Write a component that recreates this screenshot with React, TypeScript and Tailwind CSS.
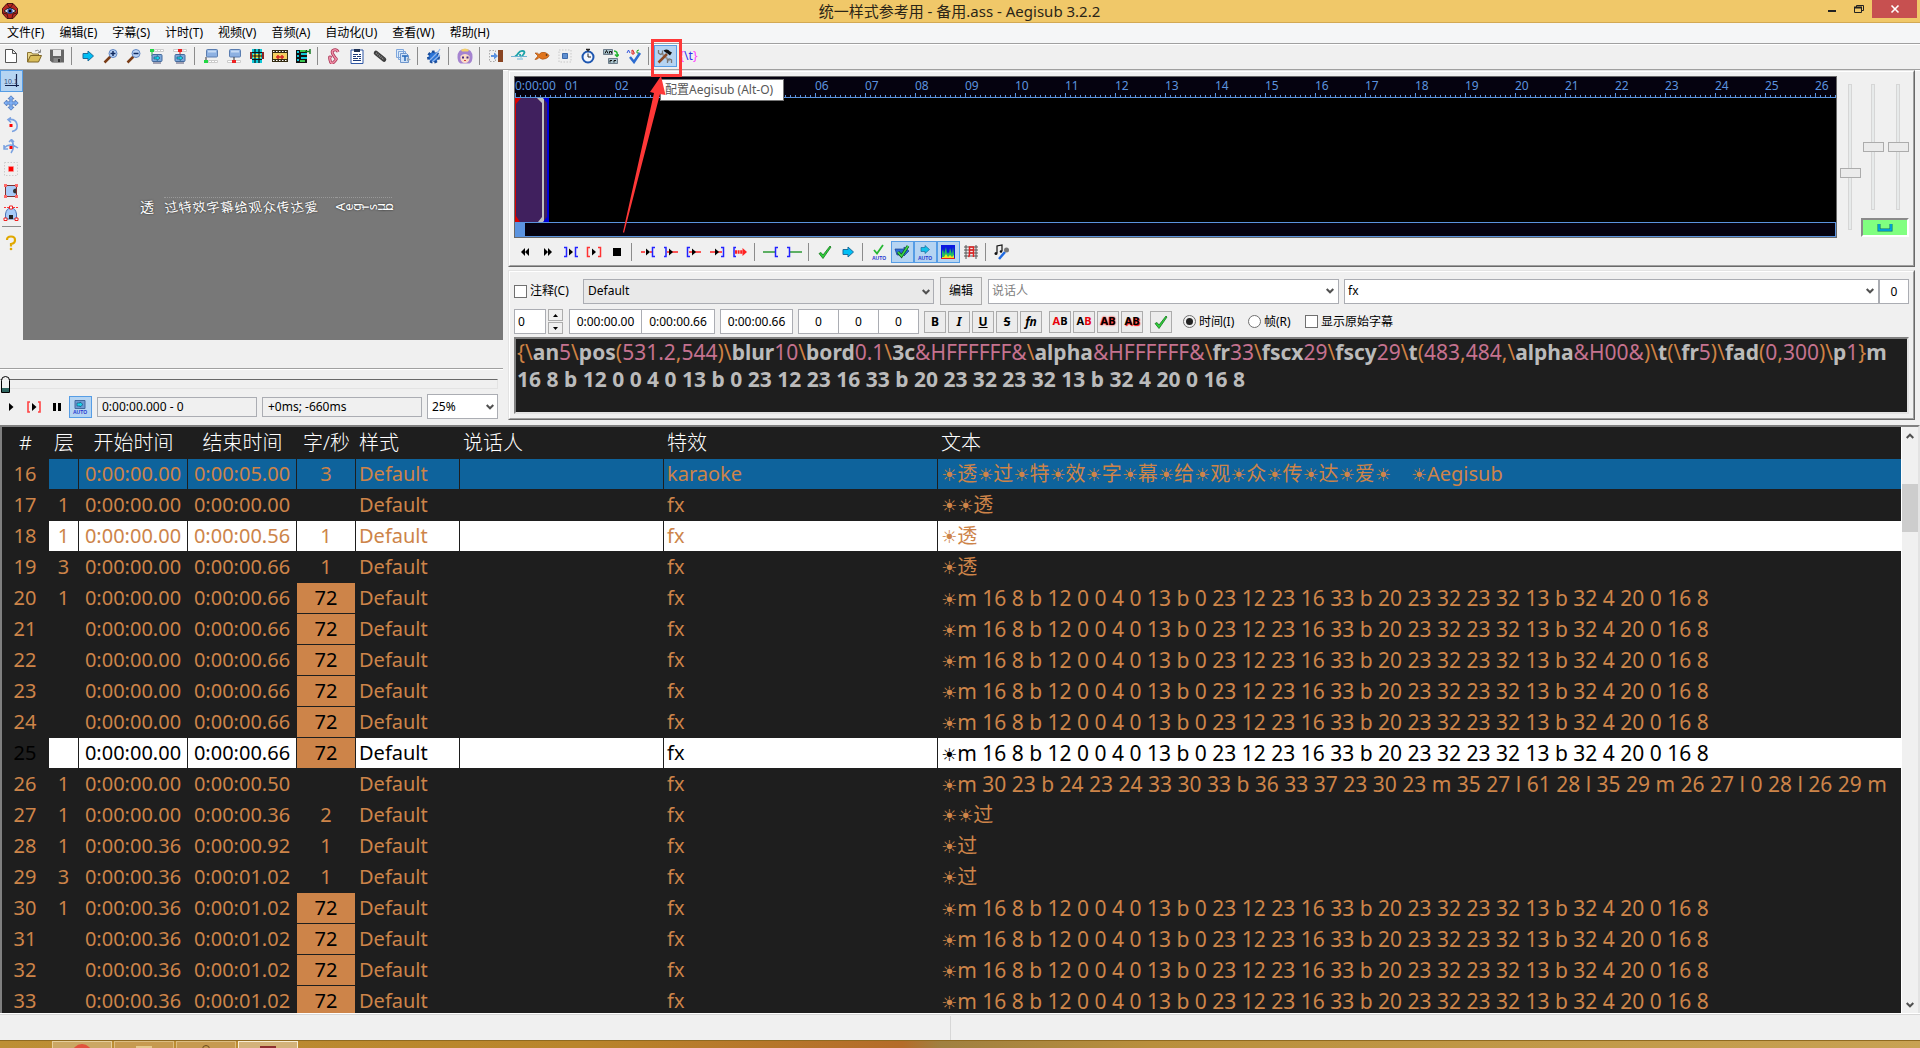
/**
 * Subtitle editor window: toolbar, video preview, audio display, line editor and grid.
 */

import type { ReactNode } from 'react'
import clsx from 'clsx'

const ICONS: Record<string, ReactNode> = {
  new: (
    <path d="M2.5 1.5h7l4 4v9h-11zM9.5 1.5v4h4" fill="#fff" stroke="#555" />
  ),
  open: (
    <>
      <path d="M1.500 14V4.500h4l1 1.500h6V8" fill="#e9d68a" stroke="#8b7433" />
      <path d="M1.500 14l3-6.500h11l-3 6.500z" fill="#d9bd5a" stroke="#7d6526" />
      <path d="M9 3q3-2 5 1M14.500 1.500V4.500H12" fill="none" stroke="#888" />
    </>
  ),
  save: (
    <>
      <path d="M1 1.500h14v13H3l-2-2z" fill="#666" />
      <path d="M4 2h8v6H4z" fill="#e8e8e8" />
      <path d="M4.500 10h7v4.500h-7z" fill="#888" />
      <path d="M9 11h2v3H9z" fill="#333" />
    </>
  ),
  jump: <path d="M3 5.500h5V3l5.500 5L8 13v-2.500H3z" fill="#00bff5" stroke="#1b6d9c" />,
  zoomIn: (
    <>
      <path d="M1.500 14.500l6-6" stroke="#7a3c16" strokeWidth="2.500" />
      <circle cx="10" cy="5.500" r="4" fill="#b9d2f5" stroke="#5f86c4" />
      <path d="M7.500 5.500h5M10 3v5" stroke="#102a60" strokeWidth="1.500" />
    </>
  ),
  zoomOut: (
    <>
      <path d="M1.500 14.500l6-6" stroke="#7a3c16" strokeWidth="2.500" />
      <circle cx="10" cy="5.500" r="4" fill="#b9d2f5" stroke="#5f86c4" />
      <path d="M7.500 5.500h5" stroke="#102a60" strokeWidth="1.500" />
    </>
  ),
  jumpStart: (
    <>
      <path d="M1 1h4v3H1z" fill="#22d844" />
      <path d="M5.500 1.500h9v2h-9zM8.500 1.500v2M11.500 1.500v2" fill="#fff" stroke="#ccc" />
      <path d="M3 4v4" stroke="#22a844" />
      <rect x="3" y="6.500" width="10" height="7" rx="1" fill="#7ea8da" stroke="#446a9c" />
      <path d="M5 9h3V7.500l3 2.500-3 2.500V11H5z" fill="#16d5ee" stroke="#174a6c" strokeWidth=".6" />
      <path d="M4 15h8" stroke="#557" />
    </>
  ),
  jumpEnd: (
    <>
      <path d="M1.500 1.500h13v2h-13zM11 1.500v2" fill="#fff" stroke="#ccc" />
      <path d="M6 1h4v3H6z" fill="#ee2222" />
      <path d="M8 4v3" stroke="#c22" />
      <rect x="3" y="6.500" width="10" height="7" rx="1" fill="#7ea8da" stroke="#446a9c" />
      <path d="M5 9h3V7.500l3 2.500-3 2.500V11H5z" fill="#16d5ee" stroke="#174a6c" strokeWidth=".6" />
      <path d="M4 15h8" stroke="#557" />
    </>
  ),
  snapStart: (
    <>
      <rect x="3.500" y="1.500" width="11" height="7.500" rx="1" fill="#8db1e2" stroke="#5a7db0" />
      <path d="M5 2.500h8v2H5z" fill="#c5daf5" />
      <path d="M3 9v3" stroke="#333" />
      <path d="M1 12h4v3H1z" fill="#22d844" />
      <path d="M5.500 12.500h9v2h-9zM8.500 12.500v2M11.500 12.500v2" fill="#fff" stroke="#ccc" />
    </>
  ),
  snapEnd: (
    <>
      <rect x="3.500" y="1.500" width="11" height="7.500" rx="1" fill="#8db1e2" stroke="#5a7db0" />
      <path d="M5 2.500h8v2H5z" fill="#c5daf5" />
      <path d="M1.500 12.500h13v2h-13z" fill="#fff" stroke="#ccc" />
      <path d="M8 9v3" stroke="#333" />
      <path d="M6 12h4v3H6z" fill="#ee2222" />
    </>
  ),
  selectVisible: (
    <>
      <path d="M1 4h14v7H1z" fill="#8d2222" />
      <path d="M3 1h10v14H3z" fill="#10c8d8" />
      <path d="M4 6h8v4H4z" fill="#e8e040" />
      <path d="M3 4.500h10M3 8h10M3 11.500h10M6 1v14M10 1v14" stroke="#111" strokeWidth="1.200" />
    </>
  ),
  snapScene: (
    <>
      <path d="M0 2h16v12H0z" fill="#332a10" />
      <path d="M1 5h14v6H1z" fill="#f5d060" />
      <path d="M1 3.500h14M1 12.500h14" stroke="#fff" strokeDasharray="1.500 1.500" />
      <path d="M4 9h8M6 7v4M10 7v4" stroke="#d42222" strokeWidth="1.500" />
    </>
  ),
  shiftFrame: (
    <>
      <path d="M1 2h11v13H1z" fill="#111" />
      <path d="M2 3h2v2H2zM2 7h2v2H2zM2 11h2v2H2zM6 5h6v2H6zM6 9h6v2H6z" fill="#10c8d8" />
      <path d="M5 2h6v2H5zM5 12h5v2H5z" fill="#38c850" />
      <path d="M15 1v5M15 3.500h-5" stroke="#167a22" strokeWidth="1.500" />
    </>
  ),
  styles: (
    <>
      <path d="M12 4q-1-3-4-2T7 6.500t3 4-2 3.500-4-2 1-2" fill="none" stroke="#a83252" strokeWidth="3" />
      <path d="M12 4q-1-3-4-2T7 6.500t3 4-2 3.500-4-2 1-2" fill="none" stroke="#f090a8" strokeWidth="1.500" />
    </>
  ),
  properties: (
    <>
      <path d="M2 2h12v13.500H2z" fill="#fff" stroke="#2f57a5" />
      <path d="M5 1h6v3H5z" fill="#1c3054" />
      <path d="M4 6.500h5M10 6.500h2M4 8.500h3M8 8.500h4M4 10.500h5M10 10.500h2M4 12.500h8" stroke="#1b3a7a" />
    </>
  ),
  attach: (
    <>
      <path d="M4 5l8 6.500" stroke="#3d3d3d" strokeWidth="4.500" strokeLinecap="round" />
      <path d="M4 5l8 6.500" stroke="#888" strokeWidth="2" strokeDasharray="1 1" />
    </>
  ),
  fonts: (
    <>
      <path d="M1.500 1.500h7v8h-7zM3.500 3.500h7v8h-7z" fill="#dcebfa" stroke="#7ea6dc" />
      <path d="M5.500 5.500h6l2 2v7h-8z" fill="#cfe2f8" stroke="#6f96cc" />
      <path d="M7 8h6M10 8v5" stroke="#2467b8" strokeWidth="1.500" />
      <path d="M12 9.500l4 2-4 2z" fill="#9ab" />
    </>
  ),
  gear: (
    <>
      <circle cx="7.500" cy="9" r="5" fill="#2368c8" stroke="#1a4d9c" strokeWidth="3" strokeDasharray="2.500 1.800" />
      <circle cx="7.500" cy="9" r="4" fill="#2b74d8" />
      <path d="M4 12l8-8 2-3M6 14l8-7" stroke="#8fb4ea" strokeWidth="1.200" fill="none" />
    </>
  ),
  girl: (
    <>
      <path d="M.500 9q0-8 7.500-8t7.500 8q0 5-3 6.500H3.500q-3-1.500-3-6.500z" fill="#a583d0" />
      <path d="M3.500 8q4.500-4 9 0v3q-1 4-4.500 4t-4.500-4z" fill="#fbdcc8" />
      <path d="M4 2q4-3 8 0l-1 1.500H5z" fill="#f2cf6a" />
      <path d="M5 9.500h2M9.500 9.500h2" stroke="#4a2a80" strokeWidth="1.800" />
      <path d="M7 12.500h2" stroke="#d04040" />
    </>
  ),
  shiftTimes: (
    <>
      <path d="M1.500 2.500h6v11h-6z" fill="none" stroke="#aaa" strokeDasharray="1.500 1.500" />
      <path d="M10 2h5v12h-5z" fill="#8a4522" />
      <path d="M3 7h3V4.500L10 8l-4 3.500V9H3z" fill="#5b92e0" />
    </>
  ),
  wave: (
    <>
      <path d="M4 8.500q2-1 3.500-3.500T12 3t0 4-3-1" fill="none" stroke="#1aa2a8" strokeWidth="1.800" />
      <path d="M0 8.500h16M6 11h6" stroke="#6fb4d4" />
    </>
  ),
  fish: (
    <>
      <path d="M1 5l3 3-3 3.500q3 0 4-2 3 3 7 1 2.500-1 3-3-1-2-4-3-4-1-6 2-1-2-4-1.500z" fill="#e0741c" stroke="#a84f10" strokeWidth=".7" />
      <circle cx="12.500" cy="7" r=".8" fill="#222" />
    </>
  ),
  resample: (
    <>
      <path d="M2 2h12v12H2z" fill="none" stroke="#c8c8c8" strokeDasharray="1.500 1.500" />
      <path d="M5.500 5.500h5v5h-5z" fill="#5f8fd0" stroke="#3d6aac" />
    </>
  ),
  clock: (
    <>
      <circle cx="8" cy="9" r="5.500" fill="#f4f8ff" stroke="#1d56b0" strokeWidth="2" />
      <path d="M6 1.500h4M8 1.500v2" stroke="#222" strokeWidth="1.500" />
      <path d="M8 5.500V9h3" stroke="#222" fill="none" />
    </>
  ),
  translate: (
    <>
      <path d="M.500 1.500h9v5h-9zM5.500 10.500h9v5h-9z" fill="#a9c3cc" stroke="#567" strokeWidth=".8" />
      <path d="M2 5.500l1.500-3 1.500 3M6.500 5.500V3.500h2v2M7 14.500v-2h2M11 14.500v-2h2" fill="none" stroke="#111" />
      <path d="M11 3q4 0 3 5M12 6.500l2 2 2-2" fill="none" stroke="#1fb52e" strokeWidth="1.500" />
    </>
  ),
  spell: (
    <>
      <path d="M1 5l1.500-3L4 5" fill="none" stroke="#3355dd" />
      <path d="M6 2v4h2q1-2-1-2 2-1-1-2" fill="none" stroke="#dd2222" />
      <path d="M13 2q-3 0-2 3h2" fill="none" stroke="#22aa22" />
      <path d="M4 9l4 5 6-9" fill="none" stroke="#2d6cd0" strokeWidth="2.500" />
    </>
  ),
  options: (
    <>
      <path d="M4.500 5l8 8" stroke="#999" strokeWidth="2" />
      <path d="M1.500 2v3l2 1.500 2-1V2.500M14.500 15v-3l-2-1-2 1v3" fill="none" stroke="#777" strokeWidth="1.300" />
      <path d="M1.500 14.500L10 6" stroke="#8b4a26" strokeWidth="2.500" />
      <path d="M6.500 2.500q4-2.500 6.500 1l2 1-2 3-2.500-2L8 4z" fill="#111" />
    </>
  ),
  cross: (
    <>
      <path d="M2 12.500h14M13.500 1v13" stroke="#10204c" strokeWidth="1.200" />
      <text x="1" y="11" fontSize="7" fill="#334a78" fontFamily="Liberation Sans, sans-serif">10.1</text>
    </>
  ),
  move: (
    <path
      d="M8 .800l3 3H9.200v3h3V5l3 3-3 3V9.200h-3v3H11l-3 3-3-3h1.800v-3h-3V11l-3-3 3-3v1.800h3v-3H5z"
      fill="#7fb0f5"
      stroke="#4a74b8"
      strokeWidth=".8"
    />
  ),
  rotZ: (
    <>
      <path d="M5 2.500q8-1 9 5t-5 7M8 .500l-3 2 3 3" fill="none" stroke="#7ba2e0" strokeWidth="1.600" />
      <path d="M6.500 7h3v3h-3z" fill="#f00" />
    </>
  ),
  rotXY: (
    <>
      <path d="M1 9q6-6 14 0M1 6v4h4M8 1q5 6 0 13M6 3l2.500-2.500L11 3" fill="none" stroke="#7ba2e0" strokeWidth="1.500" />
      <path d="M6.500 7h3v3h-3z" fill="#f00" />
    </>
  ),
  scale: (
    <>
      <path d="M1.500 1.500h13v13h-13z" fill="none" stroke="#ccc" strokeDasharray="1.500 1.500" />
      <path d="M5.500 5.500h5v5h-5z" fill="#f00" stroke="#f99" strokeWidth=".5" />
    </>
  ),
  clip: (
    <>
      <path d="M2.500 2.500h11v11h-11z" fill="#a8cbf8" stroke="#803030" />
      <path d="M1 1h3v3H1zM12 1h3v3h-3zM1 12h3v3H1zM12 12h3v3h-3z" fill="#ff6a6a" />
      <path d="M13 5.500q-3 0-3 2.500t3 2.500z" fill="#333" />
    </>
  ),
  vclip: (
    <>
      <path d="M2.500 14V9q1-6 5.500-6t5.500 6v5z" fill="#a8cbf8" stroke="#4a74b8" />
      <path d="M1 2.500h14" stroke="#f33" strokeDasharray="2 1" />
      <path d="M1 13h3v2.500H1zM12 13h3v2.500h-3zM6.500 1h3v3h-3z" fill="#fff" stroke="#e22" />
      <path d="M6 14v-4h4v4z" fill="#222" />
    </>
  ),
  help: (
    <>
      <path d="M4 5q0-3.500 4-3.500t4 3.500-4 4v2.500" fill="none" stroke="#e0a800" strokeWidth="2.200" />
      <circle cx="8" cy="14" r="1.300" fill="#e0a800" />
    </>
  ),
  play: <path d="M6 4l4.500 4L6 12z" fill="#000" />,
  playLine: (
    <>
      <path d="M4 3H2v10h2M12 3h2v10h-2" fill="none" stroke="#f44" strokeWidth="1.600" />
      <path d="M6 4l4.500 4L6 12z" fill="#000" />
    </>
  ),
  pause: <path d="M4 4h3v8H4zM9 4h3v8H9z" fill="#000" />,
  autoVideo: (
    <>
      <path d="M3 1.500h10v8H3z" fill="#6c98d2" stroke="#44699c" />
      <path d="M5 4h3V3l3 2.500L8 8V7H5z" fill="#16d5ee" stroke="#174a6c" strokeWidth=".6" />
      <text x="1" y="15" fontSize="5" fontWeight="700" fill="#2436d0" fontFamily="Liberation Sans, sans-serif">AUTO</text>
    </>
  ),
  prev: <path d="M8 4v8L4 8zM12 4v8L8 8z" fill="#000" />,
  next: <path d="M4 4v8l4-4zM8 4v8l4-4z" fill="#000" />,
  playSel: (
    <>
      <path d="M1 3.500h2.500v9H1M15 3.500h-2.500v9H15" fill="none" stroke="#22f" strokeWidth="1.500" />
      <path d="M6 4.500v7L10 8z" fill="#000" />
    </>
  ),
  playLineRed: (
    <>
      <path d="M4 3.500H1.500v9H4M12 3.500h2.500v9H12" fill="none" stroke="#f33" strokeWidth="1.500" />
      <path d="M6 4.500v7L10 8z" fill="#000" />
    </>
  ),
  stop: <path d="M4 4h8v8H4z" fill="#000" />,
  before: (
    <>
      <path d="M1 8h4M10 8h2" stroke="#f22" strokeWidth="1.500" />
      <path d="M6 4.500v7L10 8z" fill="#000" />
      <path d="M15 3.500h-2.500v9H15" fill="none" stroke="#22f" strokeWidth="1.500" />
    </>
  ),
  after: (
    <>
      <path d="M1 3.500h2v9H1" fill="none" stroke="#22f" strokeWidth="1.500" />
      <path d="M4 8h11" stroke="#f22" strokeWidth="1.500" />
      <path d="M6 4.500v7L10 8z" fill="#000" />
    </>
  ),
  begin: (
    <>
      <path d="M4 3.500H1.500v9H4" fill="none" stroke="#22f" strokeWidth="1.500" />
      <path d="M3 8h12" stroke="#f22" strokeWidth="1.500" />
      <path d="M6 4.500v7L10 8z" fill="#000" />
    </>
  ),
  finish: (
    <>
      <path d="M12 3.500h2.500v9H12" fill="none" stroke="#22f" strokeWidth="1.500" />
      <path d="M1 8h12" stroke="#f22" strokeWidth="1.500" />
      <path d="M6 4.500v7L10 8z" fill="#000" />
    </>
  ),
  toEnd: (
    <>
      <path d="M4 3.500H2v9h2" fill="none" stroke="#22f" strokeWidth="1.500" />
      <path d="M3 8h9" stroke="#f22" strokeWidth="3.500" strokeDasharray="2 .600" />
      <path d="M10.500 4v8L15 8z" fill="#f22" />
    </>
  ),
  leadIn: (
    <>
      <path d="M0 8h12" stroke="#2c9a34" strokeWidth="1.500" />
      <path d="M15 3.500h-2.500v9H15" fill="none" stroke="#22f" strokeWidth="1.500" />
    </>
  ),
  leadOut: (
    <>
      <path d="M4 8h12" stroke="#2c9a34" strokeWidth="1.500" />
      <path d="M1 3.500h2.500v9H1" fill="none" stroke="#22f" strokeWidth="1.500" />
    </>
  ),
  commit: (
    <path d="M2 9.500l2-1 2 2.500 7-9 1 1-8 11.500z" fill="#2fd03c" stroke="#15781d" strokeWidth=".8" />
  ),
  autoCommit: (
    <>
      <path d="M3 6l3 3.500L12 1" fill="none" stroke="#27b834" strokeWidth="1.800" />
      <text x="1" y="15.500" fontSize="5" fontWeight="700" fill="#2436d0" fontFamily="Liberation Sans, sans-serif">AUTO</text>
    </>
  ),
  nextCommit: (
    <>
      <path d="M1 5h9V3l5 4-5 5v-1H3z" fill="#2a6ad8" stroke="#173f8c" strokeWidth=".7" />
      <path d="M4 8l3.500 4L14 2" fill="none" stroke="#16501c" strokeWidth="3" />
      <path d="M4 8l3.500 4L14 2" fill="none" stroke="#38d848" strokeWidth="1.600" />
    </>
  ),
  autoNext: (
    <>
      <path d="M4 3.500h4v-2l4.500 4-4.500 4v-2H4z" fill="#12c0ea" stroke="#1b6d9c" strokeWidth=".7" />
      <text x="1" y="15.500" fontSize="5" fontWeight="700" fill="#2436d0" fontFamily="Liberation Sans, sans-serif">AUTO</text>
    </>
  ),
  spectrum: (
    <>
      <path d="M1 1h14v14H1z" fill="#0a18e0" />
      <path d="M2 15V8l1-3 1 5 2-7 1 7 1-2 1 2 1-6 2 6 1-7 1 8v4z" fill="#20c060" />
      <path d="M2 15v-2l2 0 2-3 2 3 2-2 2 2 2-2v4z" fill="#f5e020" />
      <path d="M1 14.500h14" stroke="#e02020" />
    </>
  ),
  medusa: (
    <>
      <path d="M1 3h14M1 6h14M1 9h14M1 12h14M3 1v14M13 1v14" stroke="#555" />
      <path d="M5.500 13q1-1 1-4V3h4v10M6.500 6h4M6.500 9h4" fill="none" stroke="#e32222" strokeWidth="1.500" />
    </>
  ),
  karaoke: (
    <>
      <path d="M3 9V2l5-1v6" fill="none" stroke="#111" strokeWidth="1.200" />
      <circle cx="2" cy="9.500" r="1.500" fill="#111" />
      <circle cx="7" cy="7.500" r="1.300" fill="#111" />
      <path d="M5 15l6-7" stroke="#1f6ae0" strokeWidth="2.500" />
      <circle cx="12.500" cy="6" r="2.500" fill="#777" />
    </>
  ),
}

type Tool = { icon: string; label: string; on?: boolean } | null

const MAIN_TOOLS: Tool[] = [
  { icon: 'new', label: '新建' },
  { icon: 'open', label: '打开' },
  { icon: 'save', label: '保存' },
  null,
  { icon: 'jump', label: '跳转' },
  { icon: 'zoomIn', label: '放大' },
  { icon: 'zoomOut', label: '缩小' },
  { icon: 'jumpStart', label: '跳到开始' },
  { icon: 'jumpEnd', label: '跳到结束' },
  null,
  { icon: 'snapStart', label: '对齐开始' },
  { icon: 'snapEnd', label: '对齐结束' },
  { icon: 'selectVisible', label: '选择可见' },
  { icon: 'snapScene', label: '对齐场景' },
  { icon: 'shiftFrame', label: '平移到帧' },
  null,
  { icon: 'styles', label: '样式管理' },
  { icon: 'properties', label: '属性' },
  { icon: 'attach', label: '附件' },
  { icon: 'fonts', label: '字体收集' },
  null,
  { icon: 'gear', label: '自动化' },
  null,
  { icon: 'girl', label: '助手' },
  null,
  { icon: 'shiftTimes', label: '平移时间' },
  { icon: 'wave', label: '样式助手' },
  { icon: 'fish', label: '翻译' },
  { icon: 'resample', label: '重设分辨率' },
  { icon: 'clock', label: '时间后续处理' },
  { icon: 'translate', label: '翻译助手' },
  { icon: 'spell', label: '拼写检查' },
  null,
  { icon: 'options', label: '配置', on: true },
]

const VIDEO_TOOLS: Tool[] = [
  { icon: 'cross', label: '标准', on: true },
  { icon: 'move', label: '拖动' },
  { icon: 'rotZ', label: '旋转 Z' },
  { icon: 'rotXY', label: '旋转 XY' },
  { icon: 'scale', label: '缩放' },
  { icon: 'clip', label: '矩形裁剪' },
  { icon: 'vclip', label: '矢量裁剪' },
]

const PLAY_TOOLS: Tool[] = [
  { icon: 'play', label: '播放' },
  { icon: 'playLine', label: '播放当前行' },
  { icon: 'pause', label: '暂停' },
  { icon: 'autoVideo', label: '自动跳转', on: true },
]

const AUDIO_TOOLS: Tool[] = [
  { icon: 'prev', label: '上一行' },
  { icon: 'next', label: '下一行' },
  { icon: 'playSel', label: '播放选区' },
  { icon: 'playLineRed', label: '播放当前行音频' },
  { icon: 'stop', label: '停止' },
  null,
  { icon: 'before', label: '播放前 500ms' },
  { icon: 'after', label: '播放后 500ms' },
  { icon: 'begin', label: '播放起始 500ms' },
  { icon: 'finish', label: '播放末尾 500ms' },
  { icon: 'toEnd', label: '播放到结尾' },
  null,
  { icon: 'leadIn', label: '前置' },
  { icon: 'leadOut', label: '后置' },
  null,
  { icon: 'commit', label: '提交' },
  { icon: 'jump', label: '转到选区' },
  null,
  { icon: 'autoCommit', label: '自动提交' },
  { icon: 'nextCommit', label: '提交后下一行', on: true },
  { icon: 'autoNext', label: '自动滚动', on: true },
  { icon: 'spectrum', label: '频谱', on: true },
  { icon: 'medusa', label: 'Medusa' },
  null,
  { icon: 'karaoke', label: '卡拉OK' },
]

const MENUS = ['文件(F)', '编辑(E)', '字幕(S)', '计时(T)', '视频(V)', '音频(A)', '自动化(U)', '查看(W)', '帮助(H)']

const SHAPE = '☀m 16 8 b 12 0 0 4 0 13 b 0 23 12 23 16 33 b 20 23 32 23 32 13 b 32 4 20 0 16 8'

interface Line {
  n: number
  layer: string
  start: string
  end: string
  cps: string
  effect: string
  text: string
}

const line = (n: number, layer: string, start: string, end: string, cps: string, text: string, effect = 'fx'): Line => ({
  n,
  layer,
  start: `0:00:0${start}`,
  end: `0:00:0${end}`,
  cps,
  effect,
  text,
})

const LINES: Line[] = [
  line(16, '', '0.00', '5.00', '3', '☀透☀过☀特☀效☀字☀幕☀给☀观☀众☀传☀达☀爱☀　☀Aegisub', 'karaoke'),
  line(17, '1', '0.00', '0.00', '', '☀☀透'),
  line(18, '1', '0.00', '0.56', '1', '☀透'),
  line(19, '3', '0.00', '0.66', '1', '☀透'),
  line(20, '1', '0.00', '0.66', '72', SHAPE),
  line(21, '', '0.00', '0.66', '72', SHAPE),
  line(22, '', '0.00', '0.66', '72', SHAPE),
  line(23, '', '0.00', '0.66', '72', SHAPE),
  line(24, '', '0.00', '0.66', '72', SHAPE),
  line(25, '', '0.00', '0.66', '72', SHAPE),
  line(26, '1', '0.00', '0.50', '', '☀m 30 23 b 24 23 24 33 30 33 b 36 33 37 23 30 23 m 35 27 l 61 28 l 35 29 m 26 27 l 0 28 l 26 29 m'),
  line(27, '1', '0.00', '0.36', '2', '☀☀过'),
  line(28, '1', '0.36', '0.92', '1', '☀过'),
  line(29, '3', '0.36', '1.02', '1', '☀过'),
  line(30, '1', '0.36', '1.02', '72', SHAPE),
  line(31, '', '0.36', '1.02', '72', SHAPE),
  line(32, '', '0.36', '1.02', '72', SHAPE),
  line(33, '', '0.36', '1.02', '72', SHAPE),
]

// Override tags of the active line, split the way the highlighter colours them.
const OVERRIDES =
  '{\\an5\\pos(531.2,544)\\blur10\\bord0.1\\3c&HFFFFFF&\\alpha&HFFFFFF&\\fr33\\fscx29\\fscy29\\t(483,484,\\alpha&H00&)\\t(\\fr5)\\fad(0,300)\\p1}'

function Icon({ name }: { name: string }) {
  return (
    <svg viewBox="0 0 16 16" className="size-4" aria-hidden="true">
      {ICONS[name]}
    </svg>
  )
}

function ToolButton({ icon, label, on }: { icon: string; label: string; on?: boolean }) {
  return (
    <button
      type="button"
      aria-label={label}
      className={clsx(
        'flex h-[22px] w-[23px] shrink-0 items-center border pl-0.5',
        on ? 'border-[#569de5] bg-[#b5d4f2]' : 'border-transparent hover:bg-[#d8e8f8]',
      )}
    >
      <Icon name={icon} />
    </button>
  )
}

function Toolbar({ tools }: { tools: Tool[] }) {
  return (
    <>
      {tools.map((t, i) =>
        t ? (
          <ToolButton key={i} {...t} />
        ) : (
          <div key={i} className="flex w-2 shrink-0 items-center pl-0.5">
            <div className="h-[18px] w-px bg-[#8c8c8c]" />
          </div>
        ),
      )}
    </>
  )
}

function Chevron({ up }: { up?: boolean }) {
  return (
    <svg viewBox="0 0 8 6" className={clsx('h-1.5 w-2', up && 'rotate-180')} aria-hidden="true">
      <path d="M.7 1L4 4.300 7.300 1" fill="none" stroke="#505050" strokeWidth="2" />
    </svg>
  )
}

function Select({ label, value, className }: { label: string; value: string; className: string }) {
  return (
    <div className={clsx('relative h-[25px]', className)}>
      <select aria-label={label} className="h-full w-full appearance-none border border-[#abadb3] bg-inherit pl-1 outline-none">
        <option>{value}</option>
      </select>
      <span className="pointer-events-none absolute top-2.5 right-1">
        <Chevron />
      </span>
    </div>
  )
}

function Combo({ label, value, placeholder, className }: { label: string; value?: string; placeholder?: string; className: string }) {
  return (
    <div className={clsx('flex h-[25px] items-center border border-[#abadb3] bg-white pr-1', className)}>
      <input
        aria-label={label}
        defaultValue={value}
        placeholder={placeholder}
        className="min-w-0 flex-1 pl-[3px] outline-none placeholder:text-[#808080]"
      />
      <button type="button" aria-label={`${label} ▾`}>
        <Chevron />
      </button>
    </div>
  )
}

function Field({ label, value, className }: { label: string; value: string; className: string }) {
  return (
    <input
      aria-label={label}
      defaultValue={value}
      className={clsx('h-[25px] min-w-0 border border-[#abadb3] bg-white outline-none', className)}
    />
  )
}

function Panel({ children, className }: { children: ReactNode; className?: string }) {
  return (
    <section className="border border-t-[#e3e3e3] border-r-[#696969] border-b-[#696969] border-l-[#e3e3e3]">
      <div className={clsx('border border-t-white border-r-[#a0a0a0] border-b-[#a0a0a0] border-l-white', className)}>
        {children}
      </div>
    </section>
  )
}

function VSlider({ label, value }: { label: string; value: number }) {
  return (
    <input
      type="range"
      aria-label={label}
      defaultValue={value}
      className="min-h-0 w-[21px] flex-1 appearance-none bg-transparent [direction:rtl] [writing-mode:vertical-lr] [&::-webkit-slider-runnable-track]:w-1 [&::-webkit-slider-runnable-track]:border [&::-webkit-slider-runnable-track]:border-[#d6d6d6] [&::-webkit-slider-runnable-track]:bg-[#e7eaea] [&::-webkit-slider-thumb]:-ml-[9px] [&::-webkit-slider-thumb]:h-2.5 [&::-webkit-slider-thumb]:w-[21px] [&::-webkit-slider-thumb]:appearance-none [&::-webkit-slider-thumb]:border [&::-webkit-slider-thumb]:border-[#acacac] [&::-webkit-slider-thumb]:bg-[#ebebeb]"
    />
  )
}

function TitleBar() {
  return (
    <header className="flex h-[23px] shrink-0 items-start border-b border-[#d3a954] bg-[#f0c869]">
      <div className="flex flex-1 pt-[3px] pl-0.5">
        <svg viewBox="0 0 16 16" className="size-4" aria-hidden="true">
          <path d="M5 .500h6l4.500 5v5l-4.500 5H5L.500 10.500v-5z" fill="#b8261f" stroke="#4a1512" />
          <path d="M5 1l3 4 3-4M1 10l4 1 1 4M15 10l-4 1-1 4" fill="none" stroke="#4a1512" />
          <path d="M2 8q6-6 12 0-6 5-12 0z" fill="#d8d8e4" stroke="#222" />
          <circle cx="8" cy="8" r="2.600" fill="#2a4fb0" />
          <circle cx="8" cy="8" r="1.300" fill="#000" />
        </svg>
      </div>
      <h1 className="text-[15px] leading-[23px] text-[#2b2517]">统一样式参考用 - 备用.ass - Aegisub 3.2.2</h1>
      <div className="flex flex-1 items-start justify-end pr-[3px]">
        <button type="button" aria-label="最小化" className="flex h-[18px] w-[27px] items-center justify-center">
          <svg viewBox="0 0 10 10" className="size-2.5" aria-hidden="true">
            <path d="M1 7h8" stroke="#222" strokeWidth="2" />
          </svg>
        </button>
        <button type="button" aria-label="还原" className="flex h-[18px] w-[27px] items-center justify-center">
          <svg viewBox="0 0 10 10" className="size-2.5" aria-hidden="true">
            <path d="M.500 3.500h7v5h-7zM2.500 3V1.500h7v5H8" fill="none" stroke="#222" />
            <path d="M0 3.500h8" stroke="#222" strokeWidth="2" />
          </svg>
        </button>
        <button type="button" aria-label="关闭" className="flex h-[18px] w-[45px] items-center justify-center bg-[#c75050]">
          <svg viewBox="0 0 10 10" className="size-2.5" aria-hidden="true">
            <path d="M1.500 1.500l7 7M8.500 1.500l-7 7" stroke="#fff" strokeWidth="1.600" />
          </svg>
        </button>
      </div>
    </header>
  )
}

function VideoBox() {
  return (
    <div className="flex w-[503px] shrink-0 flex-col">
      <div className="flex">
        <div className="flex w-[23px] shrink-0 flex-col">
          <Toolbar tools={VIDEO_TOOLS} />
          <div className="h-2 px-0.5 pt-0.5">
            <div className="h-px bg-[#8c8c8c]" />
          </div>
          <ToolButton icon="help" label="帮助" />
        </div>
        <div className="h-[270px] flex-1 bg-[#787878] pt-[127px] pl-[117px]">
          <div className="flex items-center text-white [text-shadow:0_0_2px_#222]">
            <span className="mr-2.5 text-[14px] leading-4">透</span>
            <div className="border-t border-dotted border-[#999] pr-4.5">
              <div className="flex text-[13px] leading-[18px]">
                {[...'过特效字幕给观众传达爱'].map((c) => (
                  <span key={c} className="w-3.5 -rotate-12 text-center">{c}</span>
                ))}
              </div>
            </div>
            <div className="flex border-t border-dotted border-[#999] text-[13px] leading-[18px]">
              {[...'Aegisub'].map((c) => (
                <span key={c} className="w-2 -rotate-90 text-center">{c}</span>
              ))}
            </div>
          </div>
        </div>
      </div>
      <div className="mt-7 border-t border-b border-t-[#a0a0a0] border-b-white" />
      <input
        type="range"
        aria-label="视频位置"
        defaultValue={0}
        className="mt-[5px] h-[17px] w-[498px] appearance-none bg-transparent [&::-webkit-slider-runnable-track]:h-2.5 [&::-webkit-slider-runnable-track]:border [&::-webkit-slider-runnable-track]:border-t-[#696969] [&::-webkit-slider-runnable-track]:border-r-[#e3e3e3] [&::-webkit-slider-runnable-track]:border-b-[#e3e3e3] [&::-webkit-slider-runnable-track]:border-l-transparent [&::-webkit-slider-thumb]:-mt-1 [&::-webkit-slider-thumb]:h-[17px] [&::-webkit-slider-thumb]:w-[9px] [&::-webkit-slider-thumb]:appearance-none [&::-webkit-slider-thumb]:rounded-t-[5px] [&::-webkit-slider-thumb]:border [&::-webkit-slider-thumb]:border-black [&::-webkit-slider-thumb]:bg-linear-to-b [&::-webkit-slider-thumb]:from-[#f0f0f0] [&::-webkit-slider-thumb]:from-70% [&::-webkit-slider-thumb]:to-[#2f6660] [&::-webkit-slider-thumb]:to-70%"
      />
      <div className="mt-0.5 flex items-center">
        <Toolbar tools={PLAY_TOOLS} />
        <input
          readOnly
          aria-label="当前时间"
          value="0:00:00.000 - 0"
          className="ml-[5px] h-5 w-40 border border-[#abadb3] pl-1 outline-none"
        />
        <input
          readOnly
          aria-label="相对时间"
          value="+0ms; -660ms"
          className="ml-[5px] h-5 w-40 border border-[#abadb3] pl-[5px] outline-none"
        />
        <Select label="缩放比例" value="25%" className="ml-[5px] w-[71px] bg-white" />
      </div>
    </div>
  )
}

function AudioDisplay() {
  return (
    <div className="flex min-w-0 flex-1 flex-col border border-[#696969] bg-black">
      <div className="bg-[#05020f]">
        <div className="flex h-4 overflow-hidden leading-[17px] text-[#5b93df]">
          {Array.from({ length: 27 }, (_, i) => (
            <span key={i} className="w-[50px] shrink-0">
              {i === 0 ? '0:00:00' : String(i).padStart(2, '0')}
            </span>
          ))}
        </div>
        <svg className="block h-[5px] w-full" aria-hidden="true" shapeRendering="crispEdges">
          <defs>
            <pattern id="ticks" width="50" height="5" patternUnits="userSpaceOnUse">
              <path d="M0 0h1v5H0z" fill="#5b93df" />
              {[5, 10, 15, 20, 25, 30, 35, 40, 45].map((x) => (
                <rect key={x} x={x} y="2" width="1" height="3" fill="#5b93df" />
              ))}
              <rect y="4" width="50" height="1" fill="#5b93df" />
            </pattern>
          </defs>
          <rect width="100%" height="5" fill="url(#ticks)" />
        </svg>
      </div>
      <svg viewBox="0 0 34 124" className="h-[124px] w-[34px]" aria-hidden="true">
        <path d="M0 0h34v124H0z" fill="#40205e" />
        <path d="M0 0h6L1 6v112l4 6H0z" fill="#d80000" />
        <path d="M22 0h7v124h-6l4-5V5z" fill="#c0c0c0" />
        <path d="M28 0h6v124h-6l4-5V5z" fill="#0000d8" />
      </svg>
      <div className="h-[15px] border border-l-0 border-[#5b93df] bg-[#05020f]">
        <div className="h-full w-2.5 bg-[#5b93df]" />
      </div>
    </div>
  )
}

function AudioBox() {
  return (
    <Panel className="px-1 pt-1 pb-0.5">
      <div className="flex h-[162px]">
        <AudioDisplay />
        <div className="ml-0.5 flex w-[21px] flex-col pt-2 pb-2">
          <VSlider label="水平缩放" value={38} />
        </div>
        <div className="ml-px flex w-12 flex-col pt-2">
          <div className="flex h-[126px] gap-[3px] pl-px">
            <VSlider label="垂直缩放" value={50} />
            <VSlider label="音量" value={50} />
          </div>
          <button
            type="button"
            aria-label="联动"
            className="mt-2 flex h-[19px] items-center justify-center border-2 border-t-[#8a8a8a] border-r-white border-b-white border-l-[#8a8a8a] bg-[#80ff80]"
          >
            <svg viewBox="0 0 16 8" className="h-2 w-4" aria-hidden="true">
              <path d="M2 0v6h12V0" fill="none" stroke="#0a6a70" strokeWidth="3" />
              <path d="M2 0v6h12V0" fill="none" stroke="#00aef0" strokeWidth="1.500" />
            </svg>
          </button>
        </div>
      </div>
      <div className="mt-[3px] flex">
        <Toolbar tools={AUDIO_TOOLS} />
      </div>
    </Panel>
  )
}

const FMT_BUTTON = 'flex size-[22px] items-center justify-center border border-[#acacac] bg-[#ececec] font-bold text-black'

function Check({ label, className }: { label: string; className?: string }) {
  return (
    <label className={clsx('flex items-center gap-[3px] whitespace-nowrap', className)}>
      <input type="checkbox" className="size-[13px] appearance-none border border-[#707070] bg-white checked:bg-[#333]" />
      {label}
    </label>
  )
}

function Radio({ label, on, className }: { label: string; on?: boolean; className?: string }) {
  return (
    <label className={clsx('flex items-center gap-[3px] whitespace-nowrap', className)}>
      <input
        type="radio"
        name="unit"
        defaultChecked={on}
        className="size-[13px] appearance-none rounded-full border border-[#707070] bg-white checked:bg-[#222] checked:bg-clip-content checked:p-0.5"
      />
      {label}
    </label>
  )
}

function Highlighted({ code }: { code: string }) {
  const parts = code.match(/\\(?:[a-z]+|3c)|&H[0-9A-F]+&|[\d.]+|./g) ?? []
  return (
    <>
      {parts.map((p, i) => {
        if (p.length > 1 && p[0] === '\\') {
          return (
            <span key={i}>
              \<b className="text-[#bbbbbb]">{p.slice(1)}</b>
            </span>
          )
        }
        return (
          <span key={i} className={clsx(/[\d&]/.test(p) && 'text-[#c5728f]')}>
            {p}
          </span>
        )
      })}
    </>
  )
}

function EditBox() {
  return (
    <Panel className="px-1 pt-[5px] pb-1">
      <div className="flex h-7 items-center">
        <Check label="注释(C)" className="w-[69px]" />
        <Select label="样式" value="Default" className="w-[351px] bg-[#e9e9e9]" />
        <button type="button" className="ml-1.5 h-7 w-[42px] border border-[#acacac] bg-[#ececec]">
          编辑
        </button>
        <Combo label="说话人" placeholder="说话人" className="ml-1.5 w-[351px]" />
        <Combo label="特效" value="fx" className="ml-[5px] min-w-0 flex-1" />
        <Field label="字符数" value="0" className="w-[30px] text-center" />
      </div>
      <div className="mt-1 flex h-[25px] items-center">
        <Field label="层" value="0" className="w-8 pl-[3px]" />
        <div className="mr-1.5 ml-0.5 flex w-[15px] flex-col gap-px">
          <button type="button" aria-label="增加" className="flex h-3 items-center justify-center border border-[#acacac]">
            <svg viewBox="0 0 5 3" className="h-[3px] w-[5px]" aria-hidden="true"><path d="M0 3L2.500 0 5 3z" /></svg>
          </button>
          <button type="button" aria-label="减少" className="flex h-3 items-center justify-center border border-[#acacac]">
            <svg viewBox="0 0 5 3" className="h-[3px] w-[5px]" aria-hidden="true"><path d="M0 0h5L2.500 3z" /></svg>
          </button>
        </div>
        <Field label="开始时间" value="0:00:00.00" className="w-[73px] text-center" />
        <Field label="结束时间" value="0:00:00.66" className="-ml-px w-[74px] text-center" />
        <Field label="持续时间" value="0:00:00.66" className="ml-[5px] w-[73px] text-center" />
        <Field label="左边距" value="0" className="ml-[5px] w-[41px] text-center" />
        <Field label="右边距" value="0" className="-ml-px w-[41px] text-center" />
        <Field label="垂直边距" value="0" className="-ml-px w-[41px] text-center" />
        <div className="ml-[5px] flex gap-0.5">
          <button type="button" className={FMT_BUTTON}>B</button>
          <button type="button" className={clsx(FMT_BUTTON, 'italic')}>I</button>
          <button type="button" className={clsx(FMT_BUTTON, 'underline')}>U</button>
          <button type="button" className={clsx(FMT_BUTTON, 'line-through')}>S</button>
          <button type="button" className={clsx(FMT_BUTTON, 'italic')}>fn</button>
        </div>
        <div className="ml-[7px] flex gap-0.5 text-[11px]">
          <button type="button" className={FMT_BUTTON}>
            <span className="text-red-600">A</span>B
          </button>
          <button type="button" className={FMT_BUTTON}>
            A<span className="text-red-600">B</span>
          </button>
          <button type="button" className={clsx(FMT_BUTTON, '[text-shadow:0_0_1px_#f00,0_0_2px_#f00]')}>AB</button>
          <button type="button" className={clsx(FMT_BUTTON, '[text-shadow:1px_1px_1px_#f00]')}>AB</button>
        </div>
        <button type="button" aria-label="提交" className={clsx(FMT_BUTTON, 'ml-[7px]')}>
          <Icon name="commit" />
        </button>
        <Radio label="时间(I)" on className="ml-[11px] w-[65px]" />
        <Radio label="帧(R)" className="w-[57px]" />
        <Check label="显示原始字幕" />
      </div>
      <div
        role="textbox"
        aria-label="字幕文本"
        contentEditable
        suppressContentEditableWarning
        className="mt-[3px] h-[77px] overflow-hidden border-2 border-t-[#808080] border-r-[#e3e3e3] border-b-[#e3e3e3] border-l-[#808080] bg-[#1e1e1e] pl-px text-[21px] leading-[27px] text-[#cf8244] outline-none"
      >
        <Highlighted code={OVERRIDES} />
        <b className="text-[#bbbbbb]">m</b>{' '}
        <b className="text-[#bbbbbb]">16 8 b 12 0 0 4 0 13 b 0 23 12 23 16 33 b 20 23 32 23 32 13 b 32 4 20 0 16 8</b>
      </div>
    </Panel>
  )
}

function GridText({ text }: { text: string }) {
  return (
    <>
      {text.split(/(☀)/).map((p, i) =>
        p === '☀' ? (
          <span key={i} className="font-['DejaVu_Sans',sans-serif] text-[18px] leading-none">☀</span>
        ) : (
          p
        ),
      )}
    </>
  )
}

function Grid() {
  return (
    <div className="mt-[5px] flex min-h-0 flex-1 border-t-2 border-r-2 border-l-2 border-t-[#808080] border-r-[#e3e3e3] border-l-[#808080]">
      <div className="min-w-0 flex-1 overflow-hidden bg-[#1e1e1e]">
        <table className="w-full table-fixed border-separate border-spacing-0 text-[20px] leading-[30px] whitespace-nowrap text-[#cd8449]">
          <colgroup>
            <col className="w-[47px]" />
            <col className="w-[30px]" />
            <col className="w-[109px]" />
            <col className="w-[109px]" />
            <col className="w-[59px]" />
            <col className="w-[104px]" />
            <col className="w-[204px]" />
            <col className="w-[274px]" />
            <col />
          </colgroup>
          <thead>
            <tr className="h-8 text-white [&>th]:p-0 [&>th]:font-light">
              <th>#</th>
              <th>层</th>
              <th>开始时间</th>
              <th>结束时间</th>
              <th>字/秒</th>
              <th className="pl-[3px]! text-left">样式</th>
              <th className="pl-[3px]! text-left">说话人</th>
              <th className="pl-[3px]! text-left">特效</th>
              <th className="pl-[3px]! text-left">文本</th>
            </tr>
          </thead>
          <tbody>
            {LINES.map((l) => {
              const active = l.n === 25
              return (
                <tr
                  key={l.n}
                  className={clsx(
                    'h-[31px] [&>td]:border-r [&>td]:border-b [&>td]:border-[#1e1e1e] [&>td]:p-0',
                    l.n === 16 && '[&>td]:bg-[#0e639c]',
                    (l.n === 18 || active) && '[&>td]:bg-white',
                    active && 'text-black',
                  )}
                >
                  <td className="bg-[#1e1e1e]! text-center">{l.n}</td>
                  <td className="text-center">{l.layer}</td>
                  <td className="text-center">{l.start}</td>
                  <td className="text-center">{l.end}</td>
                  <td className={clsx('text-center', l.cps === '72' && 'bg-[#cd8449]! text-black')}>{l.cps}</td>
                  <td className="pl-[3px]!">Default</td>
                  <td />
                  <td className="pl-[3px]!">{l.effect}</td>
                  <td className={clsx('overflow-hidden border-r-0! pl-[3px]!', l.text.startsWith('☀m') && 'text-[21px]')}>
                    <GridText text={l.text} />
                  </td>
                </tr>
              )
            })}
          </tbody>
        </table>
      </div>
      <div className="flex w-[17px] flex-col items-center border-l border-white bg-[#f0f0f0]">
        <button type="button" aria-label="向上" className="flex h-[17px] items-center">
          <Chevron up />
        </button>
        <div className="mt-10 h-12 w-full bg-[#cdcdcd]" />
        <button type="button" aria-label="向下" className="mt-auto flex h-[17px] items-center">
          <Chevron />
        </button>
      </div>
    </div>
  )
}

function Taskbar() {
  return (
    <div className="flex h-2 shrink-0 items-start overflow-hidden border-t border-[#8f6a22] bg-[linear-gradient(90deg,#bd8f35,#b9852b_30%,#b46c2a_47%,#a08040_49%,#b98f3c_60%,#c8a253)] pl-[52px]">
      <div className="flex gap-0.5">
        <div className="flex h-2 w-[60px] justify-center border border-[#e6cf9c] bg-[#cba764] pt-0.5">
          <span className="size-5 shrink-0 rounded-full bg-[#e2513d]" />
        </div>
        <div className="flex h-2 w-[60px] justify-center border border-[#dcbd80] bg-[#c69a50] pt-1">
          <span className="h-3 w-4 shrink-0 bg-[#e5c98c]" />
        </div>
        <div className="flex h-2 w-[60px] justify-center border border-[#dcbd80] bg-[#c69a50] pt-[3px]">
          <span className="size-2 shrink-0 rounded-full border border-[#6b4a1c]" />
        </div>
        <div className="flex h-2 w-[60px] justify-center border border-[#f8edd2] bg-[#d3b27a] pt-1">
          <span className="h-3 w-4 shrink-0 bg-[#8d2f2f]" />
        </div>
      </div>
    </div>
  )
}

// Red marker and tooltip that point at the options button.
function Callout() {
  return (
    <>
      <div role="tooltip" className="absolute top-[79px] left-[660px] border border-[#767676] bg-white pr-2.5 pl-1 leading-5 text-[#575757]">
        配置Aegisub (Alt-O)
      </div>
      <div className="absolute top-[39px] left-[651px] h-[38px] w-[31px] border-3 border-[#fe3838]" />
      <svg viewBox="0 0 46 158" className="absolute top-[76px] left-[621px] h-[158px] w-[46px]" aria-hidden="true">
        <path d="M40 0l4.500 19-5.500-1L3 157l-1-1L33 17l-4-1z" fill="#fe3838" />
      </svg>
    </>
  )
}

export default function App() {
  return (
    <div className="relative flex h-screen flex-col overflow-hidden bg-[#f0f0f0] font-['Noto_Sans','Noto_Sans_CJK_SC',sans-serif] text-xs text-black">
      <TitleBar />
      <nav className="flex h-5 shrink-0 items-center gap-px bg-[#f5f6f7]">
        {MENUS.map((m) => (
          <button key={m} type="button" className="px-[7px] whitespace-nowrap">
            {m}
          </button>
        ))}
      </nav>
      <div className="flex h-[27px] shrink-0 items-start border-y border-[#a0a0a0] pt-px shadow-[inset_0_1px_#fff,0_1px_#fff]">
        <div className="flex">
          <Toolbar tools={MAIN_TOOLS} />
        </div>
        <button type="button" className="h-[22px] w-[23px] whitespace-nowrap text-[#3030f0]">
          <span className="text-[#ff40ff]">{'{'}</span>\t<span className="text-[#ff40ff]">{'}'}</span>
        </button>
      </div>
      <main className="flex shrink-0 gap-[5px] pr-[5px]">
        <VideoBox />
        <div className="flex min-w-0 flex-1 flex-col gap-[3px]">
          <AudioBox />
          <EditBox />
        </div>
      </main>
      <Grid />
      <footer className="flex h-[27px] shrink-0 border-t border-white pt-0.5 shadow-[inset_0_1px_#d7d7d7]">
        <div className="w-[951px] border-r border-[#d7d7d7]" />
      </footer>
      <Taskbar />
      <Callout />
    </div>
  )
}
